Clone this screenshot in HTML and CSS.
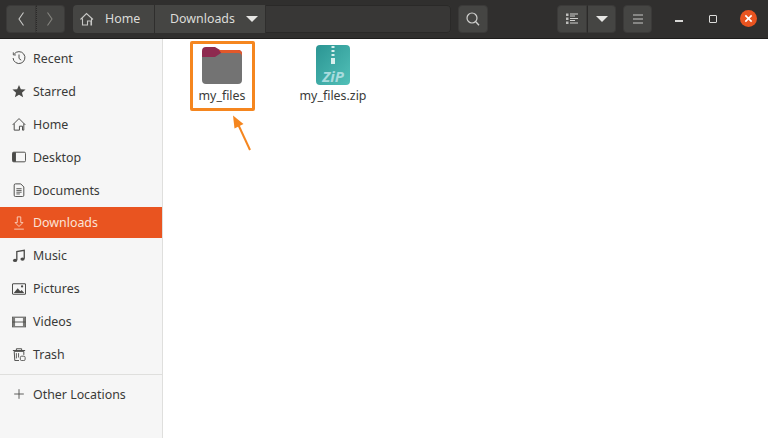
FILE: index.html
```html
<!DOCTYPE html>
<html>
<head>
    <title>Downloads</title>
    <link rel="stylesheet" href="styles.css">
</head>
<body>
    <div class="window">
        <header class="toolbar">
            <div class="btn-group nav-group">
                <button class="tool-btn nav-btn"><svg width="10" height="16" viewBox="0 0 10 16"><path d="M7.500 1.500 3 8l4.500 6.500" fill="none" stroke="#c9c9c7" stroke-width="1.100"/></svg></button>
                <button class="tool-btn nav-btn dotted"><svg width="10" height="16" viewBox="0 0 10 16"><path d="M2.500 1.500 7 8l-4.500 6.500" fill="none" stroke="#85847f" stroke-width="1.100"/></svg></button>
            </div>
            <div class="path-bar">
                <div class="crumb crumb-home">
                    <svg width="14" height="16" viewBox="0 0 14 16"><path d="M.5 8.500 6.500 2.500l6.500 6M2.500 7.500V14h5v-4h3.500v4h.5V7.500" fill="none" stroke="#c8c8c6" stroke-width="1.100"/></svg>
                    <span>Home</span>
                </div>
                <div class="crumb crumb-current">
                    <span>Downloads</span>
                    <i class="caret"></i>
                </div>
                <div class="path-rest"></div>
            </div>
            <button class="tool-btn search-btn"><svg width="16" height="16" viewBox="0 0 16 16"><circle cx="7" cy="7" r="5" fill="none" stroke="#d0d0ce" stroke-width="1.200"/><path d="M10.800 10.800l3.200 3.400" stroke="#d0d0ce" stroke-width="1.400"/></svg></button>
            <div class="btn-group view-group">
                <button class="tool-btn view-btn"><svg width="12" height="12" viewBox="0 0 12 12"><path d="M0 .5h2.500v2.500H0zM0 4.500h2.500V7H0zM0 8.500h2.500V11H0z" fill="#bdbdbb"/><path d="M4 1h8M4 3h5M4 5.500h8M4 7.500h5M4 10h8" stroke="#d0d0ce" stroke-width="1"/></svg></button>
                <button class="tool-btn caret-btn"><i class="caret"></i></button>
            </div>
            <button class="tool-btn menu-btn"><svg width="12" height="10" viewBox="0 0 12 10"><path d="M1 1h10M1 5h10M1 9h10" stroke="#c8c8c6" stroke-width="1.200"/></svg></button>
            <div class="window-controls">
                <span class="minimize"></span>
                <span class="maximize"></span>
                <span class="close"><svg width="9" height="9" viewBox="0 0 10 10"><path d="M1.500 1.500l7 7M8.500 1.500l-7 7" stroke="#fff" stroke-width="1.800"/></svg></span>
            </div>
        </header>
        <div class="main">
            <nav class="sidebar">
                <a class="side-item"><svg viewBox="0 0 16 16"><path d="M2.500 3.500A6.800 6.800 0 1 1 1.200 8" fill="none" stroke="#4a4a48" stroke-width="1.100"/><path d="M1.500 1.500v3h3" fill="none" stroke="#4a4a48"/><path d="M8 4v4.500l2.500 2" fill="none" stroke="#4a4a48" stroke-width="1.100"/></svg><span>Recent</span></a>
                <a class="side-item"><svg viewBox="0 0 16 16"><path d="M8 1l2.100 5 5.400.4-4.100 3.500 1.300 5.300L8 12.400l-4.700 2.800 1.300-5.300L.5 6.400 5.900 6z" fill="#4a4a48"/></svg><span>Starred</span></a>
                <a class="side-item"><svg viewBox="0 0 16 16"><path d="M.8 9 8 1.800 15.200 9M2.500 7.500V15h6v-4.500h3.500V15h1.500V7.500" fill="none" stroke="#4a4a48" stroke-width="1.100"/></svg><span>Home</span></a>
                <a class="side-item"><svg viewBox="0 0 16 16"><rect x=".5" y="2.500" width="15" height="11" rx="1.500" fill="none" stroke="#4a4a48" stroke-width="1.100"/><path d="M.5 4a1.500 1.500 0 0 1 1.500-1.500h2.500v11H2A1.500 1.500 0 0 1 .5 12z" fill="#4a4a48"/></svg><span>Desktop</span></a>
                <a class="side-item"><svg viewBox="0 0 16 16"><path d="M2.500 2.500a1.500 1.500 0 0 1 1.500-1.500h6l3.500 3.500v9.500a1.500 1.500 0 0 1-1.500 1.500H4a1.500 1.500 0 0 1-1.500-1.500z" fill="none" stroke="#4a4a48" stroke-width="1.100"/><path d="M5 6.500h6M5 8.500h6M5 10.500h6M5 12.500h4" fill="none" stroke="#4a4a48"/></svg><span>Documents</span></a>
                <a class="side-item active"><svg viewBox="0 0 16 16"><path d="M6 1h4v6.500h2.500L8 12 3.500 7.500H6zM2.500 15h11" fill="none" stroke="#f9cdb8" stroke-width="1.100"/></svg><span>Downloads</span></a>
                <a class="side-item"><svg viewBox="0 0 16 16"><path d="M5.500 12.500V3l8.500-1.500V11" fill="none" stroke="#4a4a48" stroke-width="1.500"/><ellipse cx="3.500" cy="13" rx="2.400" ry="1.800" fill="#4a4a48"/><ellipse cx="12" cy="11.500" rx="2.400" ry="1.800" fill="#4a4a48"/></svg><span>Music</span></a>
                <a class="side-item"><svg viewBox="0 0 16 16"><rect x=".5" y="2" width="15" height="12" rx="1" fill="none" stroke="#4a4a48" stroke-width="1.200"/><path d="M2 12.500 6.500 7l3 3.500 1.500-1.500 3 3.500z" fill="#4a4a48"/><circle cx="11.500" cy="5" r="1.300" fill="#4a4a48"/></svg><span>Pictures</span></a>
                <a class="side-item"><svg viewBox="0 0 16 16"><rect x=".5" y="2.500" width="15" height="11" fill="none" stroke="#4a4a48" stroke-width="1.100"/><path d="M.5 2.500h3v11h-3zM12.500 2.500h3v11h-3z" fill="#7a7a78"/><path d="M.5 8h15" stroke="#4a4a48"/></svg><span>Videos</span></a>
                <a class="side-item"><svg viewBox="0 0 16 16"><path d="M2.500 5h11v4M2.500 5l.7 10.500H8M1 4h14M5 4V2h6v2" fill="none" stroke="#4a4a48" stroke-width="1.100"/><path d="M5 7v6M7.500 7v5" stroke="#4a4a48"/><rect x="9.500" y="10.500" width="5.500" height="5" rx="1.500" fill="none" stroke="#4a4a48"/></svg><span>Trash</span></a>
                <div class="side-sep"></div>
                <a class="side-item other"><svg viewBox="0 0 16 16"><path d="M8 2.500v11M2.500 8h11" stroke="#4a4a48" stroke-width="1"/></svg><span>Other Locations</span></a>
            </nav>
            <section class="files">
                <div class="file">
                    <svg width="40" height="40" viewBox="0 0 40 40">
                        <path d="M0 6a4 4 0 0 1 4-4h9l5 3h18a4 4 0 0 1 4 4v7H0z" fill="#8e2a4f"/>
                        <path d="M17 5h19a4 4 0 0 1 4 4v3H22z" fill="#e2582a"/>
                        <path d="M0 12h13l6-4h17a4 4 0 0 1 4 4v23a4 4 0 0 1-4 4H4a4 4 0 0 1-4-4z" fill="#737373"/>
                    </svg>
                    <span>my_files</span>
                </div>
                <div class="file">
                    <svg width="34" height="40" viewBox="0 0 34 40">
                        <defs>
                            <linearGradient id="zip-fill" x1="0" y1="0" x2="1" y2="1">
                                <stop offset="0" stop-color="#2b9593"/>
                                <stop offset="1" stop-color="#52c0b8"/>
                            </linearGradient>
                        </defs>
                        <rect width="34" height="40" rx="4" fill="url(#zip-fill)"/>
                        <path d="M15.500 1h3v2h-3zM15.500 5h3v2h-3zM15.500 9h3v2h-3zM15 13h4v6h-4z" fill="#d8efed"/>
                        <text x="17" y="37" text-anchor="middle" class="zip-text">ZiP</text>
                    </svg>
                    <span>my_files.zip</span>
                </div>
                <div class="highlight"></div>
                <svg class="arrow" width="24" height="42" viewBox="0 0 24 42"><path d="M19 35 6.500 8" stroke="#f5861f" stroke-width="2" fill="none"/><path d="M2 .5l1.500 13 9-4.500z" fill="#f5861f"/></svg>
            </section>
        </div>
    </div>
</body>
</html>
```
FILE: styles.css
```css
* {
    box-sizing: border-box;
}

html, body {
    margin: 0;
    height: 100%;
}

body {
    font-family: "Noto Sans", sans-serif;
    font-size: 12.4px;
    background-color: #fff;
    overflow: hidden;
}

.window {
    display: flex;
    flex-direction: column;
    height: 438px;
}

.toolbar {
    display: flex;
    align-items: center;
    height: 39px;
    flex-shrink: 0;
    padding: 0 0 1px 6px;
    background-color: #302f2e;
    border-bottom: 1px solid #1e1d1c;
}

button {
    font: inherit;
    padding: 0;
}

.tool-btn {
    display: flex;
    align-items: center;
    justify-content: center;
    height: 28px;
    background-color: #454543;
    border: 1px solid #3b3a39;
    border-radius: 4px;
}

.btn-group {
    display: flex;
}

.btn-group .tool-btn:first-child {
    border-radius: 4px 0 0 4px;
}

.btn-group .tool-btn:last-child {
    border-radius: 0 4px 4px 0;
    border-left-color: #2b2a29;
}

.nav-btn {
    width: 29.5px;
}

.dotted {
    border-left: 1px dotted #1f1e1d;
}

.path-bar {
    display: flex;
    width: 378px;
    height: 28px;
    margin-left: 8px;
    border-radius: 4px;
    background-color: #454543;
    color: #dcdcd9;
}

.crumb {
    display: flex;
    align-items: center;
    height: 100%;
    border-right: 1px solid #2f2e2d;
}

.crumb-home {
    width: 82px;
    padding-left: 7px;
    gap: 11px;
}

.crumb-current {
    width: 111px;
    padding-left: 15px;
    gap: 11px;
}

.path-rest {
    flex: 1;
    border-radius: 0 4px 4px 0;
    background-color: #383736;
    border: 1px solid #2a2928;
    border-left: none;
}

.caret {
    display: block;
    width: 0;
    height: 0;
    border-left: 6px solid transparent;
    border-right: 6px solid transparent;
    border-top: 6px solid #e6e6e4;
}

.search-btn {
    width: 30px;
    margin-left: 7px;
}

.view-group {
    margin-left: 69px;
}

.view-btn {
    width: 30px;
}

.caret-btn {
    width: 29px;
}

.menu-btn {
    width: 29px;
    margin-left: 7px;
}

.window-controls {
    display: flex;
    align-items: center;
    margin-left: 23px;
}

.minimize {
    display: block;
    width: 8px;
    height: 2px;
    margin-top: 5px;
    background-color: #d8d8d6;
}

.maximize {
    display: block;
    width: 8px;
    height: 8px;
    margin-left: 26px;
    border: 1px solid #dcdcda;
    border-radius: 1px;
}

.close {
    display: flex;
    align-items: center;
    justify-content: center;
    width: 17px;
    height: 17px;
    margin-left: 23px;
    border-radius: 50%;
    background-color: #e95420;
}

.main {
    display: flex;
    flex: 1;
}

.sidebar {
    width: 163px;
    flex-shrink: 0;
    padding-top: 3px;
    background-color: #f6f6f6;
    border-right: 1px solid #dfdfdd;
    color: #3a3a38;
}

.side-item {
    display: flex;
    align-items: center;
    gap: 7px;
    height: 32.9px;
    padding-left: 12px;
}

.side-item svg {
    width: 14px;
    height: 14px;
    flex-shrink: 0;
}

.side-item.active {
    height: 31px;
    margin: 1px 0 0.9px;
    background-color: #e95420;
    color: #fbe3d7;
}

.side-sep {
    height: 1px;
    margin-top: 3px;
    background-color: #dfdfdd;
}

.other {
    margin-top: 3px;
}

.files {
    position: relative;
    display: flex;
    flex: 1;
    align-items: flex-start;
    gap: 15px;
    padding: 6px 0 0 11px;
    background-color: #fff;
}

.file {
    display: flex;
    flex-direction: column;
    align-items: center;
    gap: 2px;
    width: 96px;
    color: #3a3a38;
}

.zip-text {
    font-size: 15px;
    font-weight: bold;
    font-style: italic;
    fill: #a9dcde;
}

.highlight {
    position: absolute;
    left: 27px;
    top: 2px;
    width: 65px;
    height: 70px;
    border: 3px solid #f5861f;
    border-radius: 2px;
}

.arrow {
    position: absolute;
    left: 68px;
    top: 76px;
}
```
